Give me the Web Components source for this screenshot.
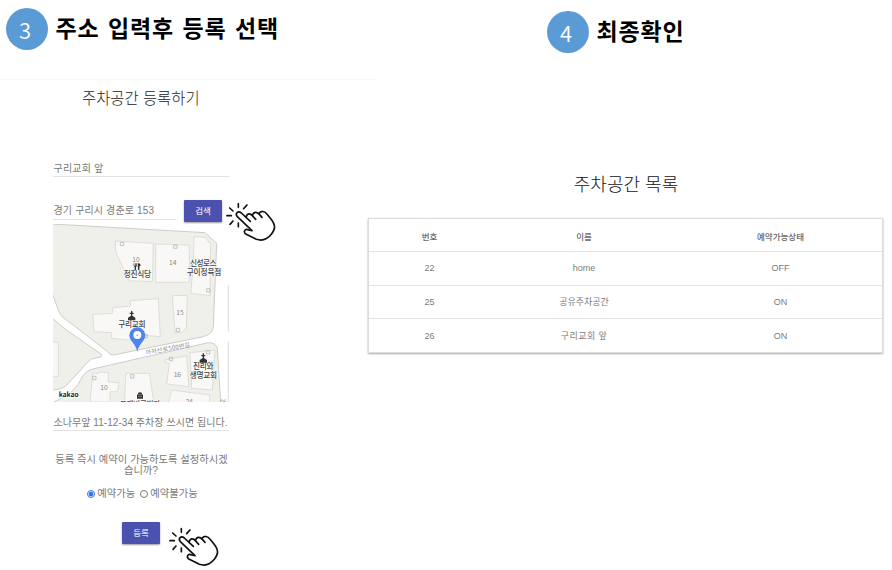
<!DOCTYPE html>
<html lang="ko">
<head>
<meta charset="utf-8">
<title>주차공간 등록</title>
<style>
body{margin:0;background:#fff;width:892px;height:570px;overflow:hidden;font-family:"Liberation Sans","Noto Sans CJK KR",sans-serif;color:#7a7a7a}
</style>
</head>
<body>
<parking-guide></parking-guide>
<script>
const define = (name, html) => {
  const t = document.createElement('template');
  t.innerHTML = html;
  customElements.define(name, class extends HTMLElement {
    constructor() {
      super();
      this.attachShadow({mode: 'open'}).appendChild(t.content.cloneNode(true));
    }
  });
};

define('step-title', `<style>
:host{display:flex;align-items:center;gap:8px;height:42px;color:#000;font:bold 23px/42px "Noto Sans CJK KR",sans-serif;letter-spacing:.85px;word-spacing:1.2px;white-space:nowrap}
.n{width:42px;height:42px;border-radius:50%;background:#5b9bd5;color:#fff;font:350 22px/42px "Noto Sans CJK KR",sans-serif;text-align:center;letter-spacing:0;text-indent:-3px}
.t{margin-top:-5px}
</style><span class="n"><slot name="num"></slot></span><span class="t"><slot></slot></span>`);

define('text-field', `<style>
:host{display:block;height:17px;line-height:17px;font-size:10px;border-bottom:1px solid #e2e2e2;white-space:nowrap;box-sizing:border-box;color:#7a7a7a}
</style><slot></slot>`);

define('raised-button', `<style>
:host{display:block;width:38px;height:22px;border-radius:1px;background:#4a51ae;color:#fff;font:8.5px/21px "Noto Sans CJK KR",sans-serif;text-align:center;box-shadow:0 1px 2px #0006}
</style><slot></slot>`);

define('tap-hand', `<style>
:host{display:block;width:54px;height:46px}
svg{display:block}
</style><svg width="54" height="46" viewBox="0 0 162 138" fill="none" stroke="#111" stroke-width="5" stroke-linecap="round" stroke-linejoin="round">
<path d="M6 50H19M14 27L24 36M40 14V25M66 18L56 29M24 66L15 76M40 72V83"/>
<path d="M81 95L37 53C29 43 39 34 49 42L76 67M68 60L63 55C66 42 76 42 82 50L92 61M82 50C86 37 96 38 103 46L111 55M101 45C107 34 119 36 125 44L138 60C153 80 151 90 139 106C127 121 112 127 94 121L61 104C54 96 62 88 71 93L81 95"/>
</svg>`);

define('radio-option', `<style>
:host{display:flex;align-items:center;gap:2px;font-size:10.3px;line-height:14px;white-space:nowrap}
i{width:8px;height:8px;box-sizing:border-box;border:1px solid #777;border-radius:50%;background:#fff}
:host([checked]) i{border-color:#3672ee;background:radial-gradient(#3672ee 0 2px,#fff 2.7px)}
</style><i></i><slot></slot>`);

define('street-map', `<style>
:host{display:block;width:176px;height:178px}
svg{display:block}
text{font-family:"Noto Sans CJK KR",sans-serif}
.land{fill:#f0f0eb;stroke:#ccc;stroke-width:3}
.b{fill:#f9f8f6;stroke:#ddddd9;stroke-width:3}
.no{font-size:20px;fill:#888;text-anchor:middle}
.poi{font-size:23px;font-weight:500;fill:#444;text-anchor:middle;paint-order:stroke;stroke:#fff;stroke-width:3px}
.mark{fill:none;stroke:#aaa;stroke-width:2}
</style><svg width="176" height="178" viewBox="9 12 528 534">
<rect x="9" y="12" width="528" height="534" fill="#fff"/>
<path class="land" d="M5 12L465 38L500 70L490 320Q488 342 460 350L190 405Q180 407 172 394L50 300Q32 290 26 273L5 215Z"/>
<path class="land" d="M5 293L45 327L153 402Q160 408 150 411L125 417Q110 425 95 447L50 495Q35 510 5 510Z"/>
<path class="land" d="M5 550L60 520Q88 495 98 468Q110 450 128 447L475 368Q496 367 502 385L512 550Z"/>
<path d="M535 195V335M535 365V546" stroke="#ddd" stroke-width="3"/>
<g class="b">
<path d="M196 63L310 70L307 185L237 182L197 95Z"/><path d="M317 72L418 75V187H317Z"/>
<path d="M432 50L465 52L482 72L480 227L422 220L430 130Z"/>
<path d="M128 283L188 280V263L241 258V242L325 236L331 350L270 345L235 360L185 355V338L132 335Z"/>
<path d="M367 227L412 226L409 325L395 338H375Z"/>
<path d="M128 460H145L147 457H175V485L207 488L203 515H180V546H120Z"/>
<path d="M228 460H298L312 550H223Z"/>
<path d="M345 420L410 407L417 500L350 492L358 430L345 427Z"/>
<path d="M420 398L495 390L487 510L425 505Z"/>
<path d="M365 510L480 525L478 550H355Z"/><path d="M5 365L25 367V470L5 468Z"/>
</g>
<g class="mark"><path d="M211 67H221V77H211ZM371 75H381V85H371ZM470 206H480V216H470ZM128 469H138V479H128ZM242 464H252V474H242ZM358 412H368V422H358ZM379 325H389V335H379ZM469 392H479V402H469ZM282 343H292V353H282Z"/></g>
<g class="no"><text x="258" y="125">10</text><text x="368" y="135">14</text><text x="390" y="284">15</text><text x="162" y="511">10</text><text x="382" y="472">16</text><text x="418" y="552">24</text><text x="519" y="556">어</text></g>
<g class="poi"><text x="262" y="172" textLength="82">정진식당</text><text x="460" y="139" textLength="80">신성로스</text><text x="462" y="166" textLength="104">구이정육점</text><text x="246" y="322" textLength="82">구리교회</text><text x="460" y="448" textLength="62">진리와</text><text x="460" y="475" textLength="82">생명교회</text><text x="270" y="561" textLength="122">그랜비르빌라</text></g>
<g fill="#333"><path d="M251 130h2v7h2v-7h2v7h2v-7h2v8l-3 3v9h-4v-9l-3-3zM263 130q8-2 9 6l-4 4v10h-4z"/>
<path id="church" d="M243 273h4v5h4v4h-4v5l9 6v8h-22v-8l9-6v-5h-4v-4h4z"/><use href="#church" x="215" y="127"/>
<path d="M264 522v-3q6-5 12 0v3l3 3v11h-18v-11z"/></g>
<path d="M264 524H276M264 530H276" stroke="#fff"/>
<text x="288" y="404" transform="rotate(-10 288 404)" textLength="135" font-size="18" fill="#888">아차산로500번길</text>
<path d="M262 395C257 371 238 362 238 346A24 24 0 1 1 286 346C286 362 267 371 262 395Z" fill="#4c83ed"/><circle cx="262" cy="345" r="12" fill="#fff"/><path d="M258 344H266L262 348Z" fill="#4c83ed"/>
<text x="26" y="530" textLength="60" font-size="21" font-weight="700" fill="#222" stroke="#fff" stroke-width="3" paint-order="stroke">kakao</text>
</svg>`);

define('register-form', `<style>
:host{display:block;width:376px;height:491px;border-top:1px solid #f7f7f7;box-sizing:border-box}
h2{margin:0;padding:6px 0 2px 82px;font:300 15.4px/22px "Noto Sans CJK KR",sans-serif;color:#222;white-space:nowrap}
.body{padding:50px 0 0 53px}
.wide{width:176px}
.row{display:flex;align-items:flex-start}
.search{margin-top:21px;height:26px}
.search text-field{width:123px;margin-top:5px;margin-right:8px;letter-spacing:.15px;text-indent:.5px;line-height:16px}
.search raised-button{margin-top:2px}
.search tap-hand{margin:1px 0 0 3px}
.place{letter-spacing:.2px;text-indent:.5px}
.memo{margin-top:12px;letter-spacing:.05px;text-indent:.5px}
p{margin:23px 0 0;width:176px;text-align:center;font-size:10.3px;line-height:11px;white-space:nowrap;text-indent:1px}
.radios{display:flex;justify-content:center;gap:5px;width:179px;margin-top:11px}
.submit{padding-left:69px;margin-top:21px}
.submit tap-hand{margin:2px 0 0 8px}
</style>
<h2>주차공간 등록하기</h2>
<div class="body">
<text-field class="wide place">구리교회 앞</text-field>
<div class="row search"><text-field>경기 구리시 경춘로 153</text-field><raised-button>검색</raised-button><tap-hand></tap-hand></div>
<street-map></street-map>
<text-field class="wide memo">소나무앞 11-12-34 주차장 쓰시면 됩니다.</text-field>
<p>등록 즉시 예약이 가능하도록 설정하시겠<br>습니까?</p>
<div class="radios"><radio-option checked>예약가능</radio-option><radio-option>예약불가능</radio-option></div>
<div class="row submit"><raised-button>등록</raised-button><tap-hand></tap-hand></div>
</div>`);

define('parking-list', `<style>
:host{display:block}
h2{margin:0 0 23px;text-align:center;font:300 18px/24px "Noto Sans CJK KR",sans-serif;color:#111;text-indent:1px}
.table{width:515px;height:135px;box-sizing:border-box;border:1px solid #ddd;display:grid;grid-template-rows:33px 33.5px 33.5px 33px;box-shadow:0 1px 2px #0005;font-size:9px}
.tr{display:grid;grid-template-columns:121px 188px 205px;text-align:center;align-items:center;border-bottom:1px solid #e2e2e2}
.tr:last-child{border-bottom:0}
.th{font-size:8.5px;font-weight:500;padding-top:2px;color:#666;font-family:"Noto Sans CJK KR",sans-serif}
</style>
<h2>주차공간 목록</h2>
<div class="table">
<div class="tr th"><span>번호</span><span>이름</span><span>예약가능상태</span></div>
<div class="tr"><span>22</span><span>home</span><span>OFF</span></div>
<div class="tr"><span>25</span><span>공유주차공간</span><span>ON</span></div>
<div class="tr"><span>26</span><span style="letter-spacing:.4px">구리교회 앞</span><span>ON</span></div>
</div>`);

define('parking-guide', `<style>
:host{display:grid;grid-template-columns:368px 515px;height:570px}
.left{padding-top:8px}
.left step-title{padding-left:5.5px;margin-bottom:29px}
.right{padding-top:11px}
.right step-title{padding-left:178.5px;margin-bottom:118px}
</style>
<div class="left"><step-title><span slot="num">3</span>주소 입력후 등록 선택</step-title><register-form></register-form></div>
<div class="right"><step-title><span slot="num">4</span>최종확인</step-title><parking-list></parking-list></div>`);
</script>
</body>
</html>
